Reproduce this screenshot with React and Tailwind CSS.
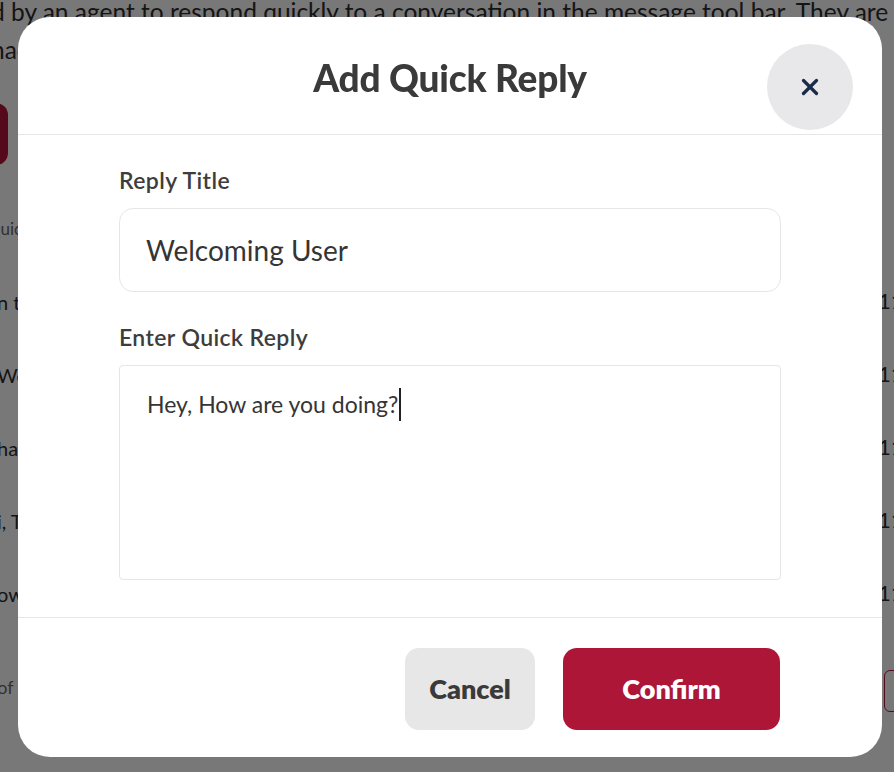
import { X } from "lucide-react";

const rows = [
  "n the meantime, let me check that for you.",
  "Welcome! How can we help you today?",
  "hank you for reaching out to us.",
  "i, Thanks for contacting support.",
  "ow can I assist you further?",
];

const App = () => {
  return (
    <div className="relative h-[772px] w-[894px] overflow-hidden bg-white font-['Lato',sans-serif] text-[#2e2e2e]">
      {/* page behind the dialog */}
      <div className="-ml-[9px] w-[1000px]">
        <p className="-mt-[7px] text-[24.5px] leading-[38px] whitespace-nowrap">
          d by an agent to respond quickly to a conversation in the message tool bar. They are
          <br />
          nade available to every agent in the workspace.
        </p>
        <div className="mt-[34px] -ml-[120px] h-[62px] w-[137px] rounded-[12px] bg-[#b3173a]" />
        <div className="mt-[51px] -ml-[4px] text-[17px] text-[#6b6b6b]">Quick replies</div>
        <div className="mt-[45px] flex flex-col">
          {rows.map((r) => (
            <div key={r} className="flex h-[73px] items-start text-[20px]">
              <span className="w-[887px] shrink-0 overflow-hidden whitespace-nowrap pl-[6px]">{r}</span>
              <span className="whitespace-nowrap text-[22px] leading-[28px]">11:24 AM</span>
            </div>
          ))}
        </div>
        <div className="mt-[22px] flex items-center">
          <span className="-ml-[26px] text-[18px] text-[#6b6b6b] whitespace-nowrap">1-5 of 5</span>
        </div>
      </div>
      <div className="absolute top-[670px] left-[884px] h-[42px] w-[40px] rounded-[6px] border border-[#b3173a]" />

      {/* overlay */}
      <div className="fixed inset-0 bg-black/[0.53]" />

      {/* dialog */}
      <div className="fixed left-[18px] top-[17px] flex h-[740px] w-[864px] flex-col rounded-[32px] bg-white">
        <div className="relative flex h-[118px] shrink-0 items-center justify-center border-b border-[#e6e6e6]">
          <h2 className="pt-[5px] text-[37px] font-black tracking-[-0.2px] text-[#3a3a3a]">Add Quick Reply</h2>
          <button className="absolute right-[29px] top-[27px] flex h-[86px] w-[86px] items-center justify-center rounded-full bg-[#e8e7e9] text-[#1b2a4b]">
            <X size={26} strokeWidth={3} />
          </button>
        </div>

        <div className="flex flex-1 flex-col border-b border-[#e6e6e6] px-[101px] pt-[29px] pb-[37px]">
          <label className="text-[23px] font-semibold leading-[33px] tracking-[0.4px] text-[#3d3d3d]">Reply Title</label>
          <div className="mt-[11px] flex h-[84px] items-center rounded-[14px] border border-[#e6e6e6] px-[26px] text-[28px] text-[#353535]">
            Welcoming User
          </div>
          <label className="mt-[29px] text-[23px] font-semibold leading-[33px] tracking-[0.4px] text-[#3d3d3d]">Enter Quick Reply</label>
          <div className="mt-[11px] h-[215px] rounded-[4px] border border-[#e6e6e6] px-[27px] pt-[14px] text-[23px] leading-[33px] text-[#353535]">
            Hey, How are you doing?<span className="ml-[1px] inline-block h-[33px] w-[2px] translate-y-[8px] bg-[#222]" />
          </div>
        </div>

        <div className="flex h-[140px] shrink-0 items-start justify-end gap-[28px] pt-[30px] pr-[102px]">
          <button className="flex h-[82px] w-[130px] items-center justify-center rounded-[14px] bg-[#e8e7e8] text-[27px] font-extrabold text-[#3a3a3a]">
            Cancel
          </button>
          <button className="flex h-[82px] w-[217px] items-center justify-center rounded-[14px] bg-[#ad1636] text-[27px] font-extrabold text-white">
            Confirm
          </button>
        </div>
      </div>
    </div>
  );
};

export default App;
